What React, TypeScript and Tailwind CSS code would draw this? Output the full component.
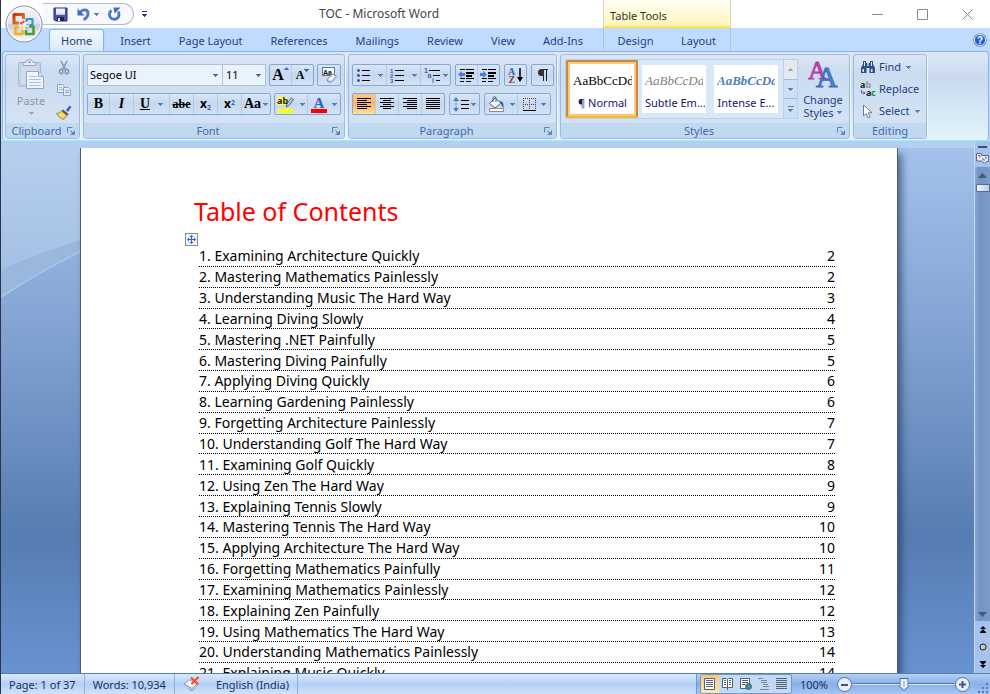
import React, { useState } from 'react';

const tocEntries = [
  { title: 'Examining Architecture Quickly', page: 2 },
  { title: 'Mastering Mathematics Painlessly', page: 2 },
  { title: 'Understanding Music The Hard Way', page: 3 },
  { title: 'Learning Diving Slowly', page: 4 },
  { title: 'Mastering .NET Painfully', page: 5 },
  { title: 'Mastering Diving Painfully', page: 5 },
  { title: 'Applying Diving Quickly', page: 6 },
  { title: 'Learning Gardening Painlessly', page: 6 },
  { title: 'Forgetting Architecture Painlessly', page: 7 },
  { title: 'Understanding Golf The Hard Way', page: 7 },
  { title: 'Examining Golf Quickly', page: 8 },
  { title: 'Using Zen The Hard Way', page: 9 },
  { title: 'Explaining Tennis Slowly', page: 9 },
  { title: 'Mastering Tennis The Hard Way', page: 10 },
  { title: 'Applying Architecture The Hard Way', page: 10 },
  { title: 'Forgetting Mathematics Painfully', page: 11 },
  { title: 'Examining Mathematics Painlessly', page: 12 },
  { title: 'Explaining Zen Painfully', page: 12 },
  { title: 'Using Mathematics The Hard Way', page: 13 },
  { title: 'Understanding Mathematics Painlessly', page: 14 },
  { title: 'Explaining Music Quickly', page: 14 },
];

const tabs = ['Home', 'Insert', 'Page Layout', 'References', 'Mailings', 'Review', 'View', 'Add-Ins'];

/* ---------- icons ---------- */

const Caret: React.FC<{ className?: string }> = ({ className = 'text-[#5a7fb5]' }) => (
  <svg width="5" height="3" viewBox="0 0 5 3" shapeRendering="crispEdges" className={`shrink-0 ${className}`}>
    <path d="M0 0h5v1H0zM1 1h3v1H1zM2 2h1v1H2z" fill="currentColor" />
  </svg>
);

const OfficeLogo = () => (
  <svg width="38" height="38" viewBox="0 0 38 38">
    <defs>
      <linearGradient id="orb" x1="0" y1="0" x2="0" y2="1">
        <stop offset="0" stopColor="#f4f6fa" />
        <stop offset="0.48" stopColor="#dfe5ee" />
        <stop offset="0.52" stopColor="#c3cddc" />
        <stop offset="1" stopColor="#fbfdff" />
      </linearGradient>
      <linearGradient id="lr" x1="0" y1="0" x2="1" y2="1">
        <stop offset="0" stopColor="#c9340c" />
        <stop offset="1" stopColor="#f58220" />
      </linearGradient>
    </defs>
    <circle cx="19" cy="19" r="18" fill="url(#orb)" stroke="#8593ab" strokeWidth="1" />
    <circle cx="19" cy="19" r="16.6" fill="none" stroke="#fff" strokeOpacity="0.8" />
    <circle cx="19" cy="20" r="5" fill="#fff" fillOpacity="0.7" />
    <g fill="none" strokeLinejoin="round">
      <path d="M14 18H9V9.500h9.500V14" stroke="url(#lr)" strokeWidth="3" />
      <path d="M21.500 17v-3h6v6h-3" stroke="#3c94d6" strokeWidth="2.200" />
      <path d="M14 22h-3.500v7h7v-4" stroke="#f3b11b" strokeWidth="2.600" />
      <path d="M24 21.500h4.500v7.500h-7.500v-4" stroke="#4f9f2f" strokeWidth="2.600" />
    </g>
    <path d="M15 17h2.500v2.500H15zM17.500 15.500h2V18h-2z" fill="#e2571b" />
    <path d="M21.500 18.500h2v2h-2z" fill="#58a9e0" />
    <path d="M16 21.500h2v2h-2z" fill="#f7c64a" />
    <path d="M20.500 22h2v2h-2z" fill="#7fbf4d" />
  </svg>
);

const SaveIcon = () => (
  <svg width="15" height="15" viewBox="0 0 15 15">
    <path d="M1 1h13v13H2.500L1 12.500z" fill="#4a4fb8" stroke="#262a80" />
    <path d="M3 1.500h9V8H3z" fill="#eef2fb" />
    <path d="M3 6.500h9V8H3z" fill="#b9c6ea" />
    <path d="M4 10h7v4H4z" fill="#20234f" />
    <path d="M5 11h2v3H5z" fill="#e5e8f5" />
  </svg>
);

const UndoIcon = () => (
  <svg width="13" height="14" viewBox="0 0 13 14">
    <path d="M3 5.500C6 1.500 11 2 11 6.500c0 3-2 5-4.500 6.200" fill="none" stroke="#4a78cc" strokeWidth="2.800" />
    <path d="M0.500 1.500v7h7z" fill="#3c6ac4" />
  </svg>
);

const RedoIcon = () => (
  <svg width="13" height="14" viewBox="0 0 13 14">
    <path d="M3.500 3.500a4.800 4.800 0 1 0 6.500 1" fill="none" stroke="#4a78cc" strokeWidth="2.800" />
    <path d="M5.500 0.500H12.500L6.500 6.500z" fill="#3c6ac4" />
  </svg>
);

const PasteIcon = () => (
  <svg width="28" height="31" viewBox="0 0 28 31">
    <rect x="1.500" y="3.500" width="22" height="24" rx="1.500" fill="#c3d2e6" stroke="#a9bad3" />
    <rect x="4" y="6" width="17" height="19" fill="#cfdcec" />
    <path d="M6 3.500h3c0-4 7-4 7 0h3v3H6z" fill="#e7edf6" stroke="#93a5c2" />
    <circle cx="12.500" cy="3" r="1.200" fill="#8ea1c0" />
    <path d="M9.500 12.500h12l5 5v12h-17z" fill="#f1f5fb" stroke="#8fa5cb" />
    <path d="M21.500 12.500v5h5" fill="#d4dff0" stroke="#8fa5cb" />
    <path d="M12 17.500h8M12 20.500h12M12 23.500h12M12 26.500h12" stroke="#aebfdb" />
  </svg>
);

const CutIcon = () => (
  <svg width="12" height="15" viewBox="0 0 12 15" fill="none" stroke="#7f94b6">
    <path d="M3 1l4.500 9M9 1L4.500 10" strokeWidth="1.500" />
    <ellipse cx="3.200" cy="11.500" rx="1.700" ry="2.200" strokeWidth="1.500" />
    <ellipse cx="8.800" cy="11.500" rx="1.700" ry="2.200" strokeWidth="1.500" />
  </svg>
);

const CopyIcon = () => (
  <svg width="16" height="14" viewBox="0 0 16 14" fill="#e4ebf6" stroke="#8fa3c5">
    <path d="M1.500 1.500h5l2 2v6h-7z" />
    <path d="M3 4.500h3M3 6.500h4" strokeOpacity="0.7" />
    <path d="M7.500 4.500h5l2 2v6h-7z" />
    <path d="M9 7.500h4M9 9.500h4" />
  </svg>
);

const BrushIcon = () => (
  <svg width="16" height="15" viewBox="0 0 16 15">
    <path d="M10 5l3.500-4.500L15.500 2 12 7z" fill="#5b57b0" />
    <path d="M7 4.500L12.500 9l-1.500 2L5.500 6z" fill="#5c5550" />
    <path d="M5.500 6L11 10.500C9.500 12.500 8 14 7 14.500 4.500 13 2 11 0.500 8.500 2.500 8.500 4 7.500 5.500 6z" fill="#f1cf56" stroke="#8e6f21" strokeWidth="0.800" />
    <path d="M3 9l4 3.500M5 8l3.500 3.500" stroke="#fdf1b0" />
  </svg>
);

const LauncherIcon = () => (
  <svg width="8" height="8" viewBox="0 0 8 8" fill="none" stroke="#5f81b4">
    <path d="M0.500 5.500v-5h5" />
    <path d="M3.500 7.500h4v-4M3.500 3.500L6 6" />
    <path d="M4 4h1v1h2v2H5z" fill="#5f81b4" stroke="none" />
  </svg>
);

const ClearFormatIcon = () => (
  <svg width="17" height="16" viewBox="0 0 17 16">
    <rect x="1.500" y="0.500" width="12" height="8" fill="#f4f7fc" stroke="#5e779f" />
    <text x="2" y="7.500" fontSize="7" fontWeight="bold" fontFamily="Liberation Sans" fill="#111">Aa</text>
    <path d="M6 12.500L11.500 7l4 2.500-5 5.500H7.500z" fill="#f3f5fa" stroke="#6f7f9c" />
    <path d="M6.500 12.500l3.500 2 5-5" fill="none" stroke="#a9b5ca" />
  </svg>
);

const HighlightIcon = () => (
  <svg width="18" height="17" viewBox="0 0 18 17">
    <path d="M0 1h10v8H0z" fill="#ffff4d" />
    <text x="0" y="8" fontSize="9" fontWeight="bold" fontFamily="Noto Sans" fill="#222">ab</text>
    <path d="M10 8L14.500 2l2 1.500-4.500 6-3 1.500z" fill="#c9cfda" stroke="#59606e" />
    <path d="M1 13h15v4H1z" fill="#ff0" />
  </svg>
);

const FontColorIcon = () => (
  <svg width="16" height="17" viewBox="0 0 16 17">
    <text x="2.500" y="11.500" fontSize="15" fontWeight="bold" fontFamily="Liberation Serif" fill="#3a5fa8">A</text>
    <path d="M0 13h16v4H0z" fill="#f00" />
  </svg>
);

const BulletsIcon = () => (
  <svg width="13" height="14" viewBox="0 0 13 14" shapeRendering="crispEdges">
    <path d="M5 2h8v1H5zM5 7h8v1H5zM5 12h8v1H5z" fill="#000" />
    <path d="M1 1h1v3H1zM0 2h3v1H0zM1 6h1v3H1zM0 7h3v1H0zM1 11h1v3H1zM0 12h3v1H0z" fill="#2f55a4" />
    <path d="M0 1h3v3H0zM0 6h3v3H0zM0 11h3v3H0z" fill="#3f62a8" fillOpacity="0.500" />
  </svg>
);

const NumberingIcon = () => (
  <svg width="14" height="15" viewBox="0 0 14 15" shapeRendering="crispEdges">
    <path d="M5 2h9v1H5zM5 7h9v1H5zM5 12h9v1H5z" fill="#000" />
    <g fontSize="6" fontWeight="bold" fontFamily="Liberation Sans" fill="#3f62a8">
      <text x="0" y="4.500">1</text>
      <text x="0" y="9.500">2</text>
      <text x="0" y="14.500">3</text>
    </g>
  </svg>
);

const MultilevelIcon = () => (
  <svg width="17" height="15" viewBox="0 0 17 15">
    <path d="M5 2h11v1H5zM9 7h7v1H9zM12 12h4v1h-4z" fill="#000" />
    <g fontSize="7" fontWeight="bold" fontFamily="Liberation Sans" fill="#3f62a8">
      <text x="0" y="5">1</text>
      <text x="3.500" y="9.500">a</text>
      <text x="8" y="14.500">i</text>
    </g>
  </svg>
);

const IndentIcon: React.FC<{ increase?: boolean }> = ({ increase }) => (
  <svg width="17" height="15" viewBox="0 0 17 15" shapeRendering="crispEdges">
    <path d="M2 1h5v1H2zM8 1h8v1H8zM8 4h8v2H8zM8 7h6v2H8zM2 10h5v1H2zM8 10h8v1H8zM2 13h4v1H2zM8 13h5v1H8z" fill="#000" />
    {increase ? (
      <path d="M0 5h3V3l4 3.500L3 10V8H0z" fill="#4a7ed0" shapeRendering="auto" />
    ) : (
      <path d="M7 5H4V3L0 6.500 4 10V8h3z" fill="#4a7ed0" shapeRendering="auto" />
    )}
  </svg>
);

const SortIcon = () => (
  <svg width="16" height="17" viewBox="0 0 16 17">
    <text x="0" y="7.500" fontSize="10" fontWeight="bold" fontFamily="Liberation Serif" fill="#3a5fa8">A</text>
    <text x="0.500" y="16" fontSize="10" fontWeight="bold" fontFamily="Liberation Serif" fill="#9b3a3a">Z</text>
    <path d="M12 1v10" stroke="#000" strokeWidth="1.500" />
    <path d="M9 10h6l-3 5z" />
  </svg>
);

const PilcrowIcon = () => (
  <svg width="12" height="14" viewBox="0 0 12 14" shapeRendering="crispEdges">
    <path d="M5 1h6v1H5zM6 1h1v12H6zM9 1h1v12H9z" fill="#222" />
    <path d="M7 1v7H4.500A3.500 3.500 0 0 1 4.500 1z" fill="#333" shapeRendering="auto" />
  </svg>
);

const AlignIcon: React.FC<{ kind: string }> = ({ kind }) => (
  <svg width="14" height="12" viewBox="0 0 14 12" shapeRendering="crispEdges">
    {[0, 2, 4, 6, 8, 10].map((y, i) => {
      const w = kind === 'justify' || i % 2 === 0 ? 14 : kind === 'center' ? 8 : 10;
      const x = kind === 'right' ? 14 - w : kind === 'center' ? (14 - w) / 2 : 0;
      return <rect key={y} x={x} y={y} width={w} height="1" />;
    })}
  </svg>
);

const LineSpacingIcon = () => (
  <svg width="16" height="15" viewBox="0 0 16 15">
    <path d="M8 3h8v1H8zM8 7h8v1H8zM8 11h8v1H8z" />
    <path d="M3 0L6 4H0zM3 15l3-4H0z" fill="#4a7ed0" />
    <path d="M3 3v9" stroke="#4a7ed0" strokeDasharray="2 1" />
  </svg>
);

const ShadingIcon = () => (
  <svg width="17" height="16" viewBox="0 0 17 16">
    <path d="M7 2l6 5-6 5-5.500-4.500z" fill="#f4f7fc" stroke="#4b5f85" />
    <path d="M5 6V2.500C5 0 8 0 8 2.500V6" fill="none" stroke="#4b5f85" />
    <path d="M12 5c3 0 4 3 3.500 7-2-1-2-4-3-5z" fill="#3763b8" />
    <path d="M1.500 12.500h14v3h-14z" fill="#fff" stroke="#8b8b8b" />
  </svg>
);

const BordersIcon = () => (
  <svg width="13" height="13" viewBox="0 0 13 13" shapeRendering="crispEdges">
    <path d="M0 0.500h13M0 6.500h13M0.500 0v12M6.500 0v12M12.500 0v12" stroke="#444" strokeDasharray="1 1" />
    <path d="M0 12h13v1H0z" />
  </svg>
);

const ChangeStylesIcon = () => (
  <svg width="30" height="30" viewBox="0 0 30 30">
    <text x="0" y="20" fontSize="26" fontFamily="Liberation Serif" fill="#b341a8" stroke="#b341a8" strokeWidth="0.900">A</text>
    <text x="8" y="28" fontSize="30" fontFamily="Liberation Serif" fill="#4a80d4" stroke="#3f6fbe" strokeWidth="1">A</text>
  </svg>
);

const FindIcon = () => (
  <svg width="16" height="14" viewBox="0 0 16 14">
    <path d="M3 1h3v2h1v3h2V3h1V1h3v3l2 4v5H9.500V8h-3v5H1V8l2-4z" fill="#2f4f86" />
    <path d="M4 2h1v4H4zM11 2h1v4h-1zM2.500 9h1.500v3H2.500zM11 9h1.500v3H11z" fill="#dce6f5" />
    <path d="M7 3.500h2v2H7z" fill="#8aa3cd" />
  </svg>
);

const ReplaceIcon = () => (
  <svg width="17" height="16" viewBox="0 0 17 16">
    <g fontSize="9" fontWeight="bold" fontFamily="Noto Sans">
      <text x="0" y="7" fill="#222">a</text>
      <text x="5.500" y="7" fill="#999">b</text>
      <text x="6" y="15" fill="#222">a</text>
      <text x="11" y="15" fill="#1f8a2c">c</text>
    </g>
    <path d="M1.500 9v3H5M3.500 10.500L5 12l-1.500 1.500" fill="none" stroke="#3f62a8" />
  </svg>
);

const SelectIcon = () => (
  <svg width="11" height="15" viewBox="0 0 11 15">
    <path d="M1.500 1v11l2.700-2.500 2 4.500 2-1-2-4.200H10z" fill="#fff" stroke="#6b7c98" />
  </svg>
);

const HelpIcon = () => (
  <svg width="14" height="14" viewBox="0 0 14 14">
    <circle cx="7" cy="7" r="6.600" fill="#3c5da0" />
    <circle cx="7" cy="7" r="5.600" fill="#2460cf" stroke="#e8f0ff" strokeWidth="1" />
    <text x="4" y="10.500" fontSize="10" fontWeight="bold" fontFamily="Liberation Sans" fill="#fff">?</text>
  </svg>
);

const MoveHandleIcon = () => (
  <svg width="9" height="9" viewBox="0 0 9 9" fill="#2f5fc4">
    <path d="M4 1h1v7H4zM1 4h7v1H1z" />
    <path d="M4.500 0L6.500 2h-4zM4.500 9l2-2h-4zM0 4.500l2-2v4zM9 4.500l-2-2v4z" />
  </svg>
);

const ProofIcon = () => (
  <svg width="18" height="16" viewBox="0 0 18 16">
    <path d="M0.500 9.500L6 5l9 4L9 15z" fill="#3c5fa8" />
    <path d="M1 8L6.500 4 15 7l-6 5.500z" fill="#eef3fb" stroke="#8395b8" strokeWidth="0.800" />
    <path d="M1 9.500L9 13.500l6-5" fill="none" stroke="#fff" />
    <path d="M8 1.500l7 7M15.500 1l-7 7" stroke="#f0512b" strokeWidth="2.200" />
  </svg>
);

const ViewIcon: React.FC<{ kind: string }> = ({ kind }) => (
  <svg width="13" height="12" viewBox="0 0 13 12" fill="none" stroke="#555f6e">
    {kind === 'print' && (
      <>
        <path d="M1.500 0.500h10v11h-10z" fill="#fff" />
        <path d="M3 2.500h7M3 4.500h7M3 6.500h7M3 8.500h7" />
      </>
    )}
    {kind === 'reading' && (
      <>
        <path d="M1.500 0.500h4l1 1 1-1h4v9h-4l-1 1-1-1h-4z" fill="#fff" />
        <path d="M6.500 1v11M3 2.500h2M3 4.500h2M3 6.500h2M8 2.500h2M8 4.500h2M8 6.500h2" />
      </>
    )}
    {kind === 'web' && (
      <>
        <path d="M1.500 0.500h9v10h-9z" fill="#fff" />
        <path d="M3 2.500h6M3 4.500h6M3 6.500h3" />
        <circle cx="9.500" cy="8.500" r="3" fill="#3e9a6a" stroke="#2c62b0" />
      </>
    )}
    {kind === 'outline' && <path d="M1 0.500h5M4 2.500h6M4 4.500h6M6 6.500h5M6 8.500h6M3 11.500h9" stroke="#7d8795" />}
    {kind === 'draft' && <path d="M1 0.500h11M1 2.500h11M1 4.500h11M1 6.500h11M1 8.500h11M1 10.500h11" />}
  </svg>
);

/* ---------- ribbon pieces ---------- */

const Group: React.FC<{ title: string; launcher?: boolean; className?: string; children: React.ReactNode }> = ({
  title,
  launcher = true,
  className = '',
  children,
}) => (
  <section
    className={`shrink-0 flex flex-col rounded-[3px] border border-[#9dbbe0] shadow-[1px_1px_0_#edf5ff] overflow-hidden bg-linear-to-b from-[#dce7f4] via-[#cbdcf0] via-20% to-[#d5e5f6] ${className}`}
  >
    <div className="flex-1 flex">{children}</div>
    <div className="h-[15px] shrink-0 flex items-center bg-[#c1d8f1] text-[11px] leading-none text-[#3e6aaa]">
      <span className="flex-1 text-center">{title}</span>
      {launcher && (
        <button aria-label={`${title} options`} className="mr-1">
          <LauncherIcon />
        </button>
      )}
    </div>
  </section>
);

const ButtonBox: React.FC<{ className?: string; children: React.ReactNode }> = ({ className = '', children }) => (
  <div
    className={`h-[22px] flex items-stretch rounded-[2px] border border-[#86a7d3] divide-x divide-[#b4cae6] bg-linear-to-b from-[#d9e6f5] via-[#c5d8ef] via-50% to-[#d3e3f5] overflow-hidden ${className}`}
  >
    {children}
  </div>
);

const Tool: React.FC<{ label: string; caret?: boolean; className?: string; children: React.ReactNode }> = ({
  label,
  caret,
  className = 'flex-1 gap-[5px]',
  children,
}) => (
  <button
    aria-label={label}
    className={`flex items-center justify-center leading-none text-black hover:bg-[#ffe7a2] ${className}`}
  >
    {children}
    {caret && <Caret />}
  </button>
);

const Ribbon = () => (
  <div className="mx-[1px] shrink-0 rounded-[4px] border border-[#8db2e3] border-b-[#8ff0f8] bg-linear-to-b from-[#dde8f5] via-[#c9daee] via-30% to-[#e3f4fd] h-[90px] flex items-stretch gap-[3px] px-[2px] pt-[2px] pb-[1px]">
    <Group title="Clipboard" className="w-[75px]">
      <button className="w-[50px] flex flex-col items-center pt-1 text-[11px] leading-4 text-[#8f98a6]">
        <PasteIcon />
        <span className="pt-[3px]">Paste</span>
        <Caret className="text-[#a3a9b3] mt-[3px]" />
      </button>
      <div className="flex flex-col items-center gap-2 pt-[5px]">
        <button aria-label="Cut">
          <CutIcon />
        </button>
        <button aria-label="Copy">
          <CopyIcon />
        </button>
        <button aria-label="Format Painter">
          <BrushIcon />
        </button>
      </div>
    </Group>

    <Group title="Font" className="w-[262px]">
      <div className="flex-1 flex flex-col gap-[7px] px-[3px] pt-[9px]">
        <div className="flex gap-[3px]">
          <div className="flex h-[22px]">
            <label className="relative flex items-center">
              <select aria-label="Font name" className="w-[136px] h-full appearance-none border border-[#abc1de] bg-[#eaf2fb] pl-[2px] text-[11px] text-black">
                <option>Segoe UI</option>
              </select>
              <Caret className="absolute right-[5px] text-[#4a6b9e]" />
            </label>
            <label className="relative flex items-center">
              <select aria-label="Font size" className="w-[43px] h-full appearance-none border border-l-0 border-[#abc1de] bg-[#eaf2fb] pl-[3px] text-[11px] text-black">
                <option>11</option>
              </select>
              <Caret className="absolute right-[5px] text-[#4a6b9e]" />
            </label>
          </div>
          <ButtonBox className="w-[45px] font-['Liberation_Serif',serif] font-bold">
            <Tool label="Grow Font" className="flex-1 text-[16px]">
              <span className="flex items-start">A<svg width="5" height="3"><path d="M2.500 0L5 3H0z" fill="#3f62a8" /></svg></span>
            </Tool>
            <Tool label="Shrink Font" className="flex-1 text-[12px]">
              <span className="flex items-start">A<Caret className="text-[#3f62a8]" /></span>
            </Tool>
          </ButtonBox>
          <ButtonBox className="w-6">
            <Tool label="Clear Formatting">
              <ClearFormatIcon />
            </Tool>
          </ButtonBox>
        </div>
        <div className="flex gap-[3px]">
          <ButtonBox className="w-[184px] font-['Liberation_Serif',serif] text-[14px] font-bold">
            <Tool label="Bold" className="w-[22px]">B</Tool>
            <Tool label="Italic" className="w-6 italic">I</Tool>
            <Tool label="Underline" caret className="w-9 gap-2">
              <span className="underline">U</span>
            </Tool>
            <Tool label="Strikethrough" className="w-6 text-[12px] line-through">abe</Tool>
            <Tool label="Subscript" className="w-6 font-['Noto_Sans',sans-serif] text-[12px]">
              <span>x<sub className="text-[7px] text-[#3f62a8]">2</sub></span>
            </Tool>
            <Tool label="Superscript" className="w-6 font-['Noto_Sans',sans-serif] text-[12px]">
              <span>x<sup className="text-[7px] text-[#3f62a8]">2</sup></span>
            </Tool>
            <Tool label="Change Case" caret className="flex-1 gap-[2px]">Aa</Tool>
          </ButtonBox>
          <ButtonBox className="w-[67px]">
            <Tool label="Text Highlight Color" caret>
              <HighlightIcon />
            </Tool>
            <Tool label="Font Color" caret>
              <FontColorIcon />
            </Tool>
          </ButtonBox>
        </div>
      </div>
    </Group>

    <Group title="Paragraph" className="w-[209px]">
      <div className="flex-1 flex flex-col gap-[7px] px-[3px] pt-[9px]">
        <div className="flex gap-1">
          <ButtonBox className="w-[99px]">
            <Tool label="Bullets" caret className="w-[34px] gap-2">
              <BulletsIcon />
            </Tool>
            <Tool label="Numbering" caret className="w-[34px] gap-2">
              <NumberingIcon />
            </Tool>
            <Tool label="Multilevel List" caret className="flex-1 gap-[2px]">
              <MultilevelIcon />
            </Tool>
          </ButtonBox>
          <ButtonBox className="w-[45px]">
            <Tool label="Decrease Indent">
              <IndentIcon />
            </Tool>
            <Tool label="Increase Indent">
              <IndentIcon increase />
            </Tool>
          </ButtonBox>
          <ButtonBox className="w-[23px]">
            <Tool label="Sort">
              <SortIcon />
            </Tool>
          </ButtonBox>
          <ButtonBox className="w-[23px]">
            <Tool label="Show Paragraph Marks">
              <PilcrowIcon />
            </Tool>
          </ButtonBox>
        </div>
        <div className="flex gap-1">
          <ButtonBox className="w-[93px]">
            <Tool label="Align Left" className="flex-1 bg-linear-to-b from-[#f9c98a] via-[#fbb45c] to-[#fee29a]">
              <AlignIcon kind="left" />
            </Tool>
            <Tool label="Center">
              <AlignIcon kind="center" />
            </Tool>
            <Tool label="Align Right">
              <AlignIcon kind="right" />
            </Tool>
            <Tool label="Justify">
              <AlignIcon kind="justify" />
            </Tool>
          </ButtonBox>
          <ButtonBox className="w-[31px]">
            <Tool label="Line Spacing" caret className="flex-1 gap-[2px]">
              <LineSpacingIcon />
            </Tool>
          </ButtonBox>
          <ButtonBox className="w-[67px]">
            <Tool label="Shading" caret>
              <ShadingIcon />
            </Tool>
            <Tool label="Borders" caret>
              <BordersIcon />
            </Tool>
          </ButtonBox>
        </div>
      </div>
    </Group>

    <Group title="Styles" className="w-[290px]">
      <div className="flex-1 flex gap-1 pl-1 py-1">
        <div className="flex border border-[#b9d0ed] bg-[#dae7f6]">
          <div className="flex items-center gap-2 pr-[5px]">
            <button className="w-[72px] h-[58px] rounded-[2px] border-2 border-[#c48a4a] border-b-[#f5b82e] bg-white shadow-[inset_0_0_0_2px_#fbc873] flex flex-col justify-center pl-[5px] pr-1 overflow-hidden">
              <span className="overflow-hidden whitespace-nowrap text-left font-['Liberation_Serif',serif] text-[13px] leading-7 text-black">AaBbCcDd</span>
              <span className="text-[11px] leading-4 text-[#15156b] whitespace-nowrap">¶ Normal</span>
            </button>
            <button className="w-16 h-12 bg-white flex flex-col justify-center px-[3px] overflow-hidden -ml-1">
              <span className="overflow-hidden whitespace-nowrap text-left font-['Liberation_Serif',serif] text-[13px] leading-7 italic text-[#808080]">AaBbCcDd</span>
              <span className="text-[11px] leading-4 text-[#15156b] whitespace-nowrap">Subtle Em...</span>
            </button>
            <button className="w-16 h-12 bg-white flex flex-col justify-center px-[3px] overflow-hidden">
              <span className="overflow-hidden whitespace-nowrap text-left font-['Liberation_Serif',serif] text-[13px] leading-7 font-bold italic text-[#4f81bd]">AaBbCcDd</span>
              <span className="text-[11px] leading-4 text-[#15156b] whitespace-nowrap">Intense E...</span>
            </button>
          </div>
          <div className="w-[14px] flex flex-col border-l border-[#b9d0ed] divide-y divide-[#9fbce2] bg-[#cddff4]">
            <button aria-label="Previous styles" className="flex-1 flex items-center justify-center bg-[#e6e9ee]">
              <Caret className="rotate-180 text-[#a0a6b0]" />
            </button>
            <button aria-label="Next styles" className="flex-1 flex items-center justify-center">
              <Caret />
            </button>
            <button aria-label="More styles" className="flex-1 flex flex-col gap-[2px] items-center justify-center">
              <span className="w-[6px] h-px bg-[#5a7fb5]" />
              <Caret />
            </button>
          </div>
        </div>
        <button className="w-[42px] flex flex-col items-center text-[11px] leading-[13px] text-[#1e3f86]">
          <ChangeStylesIcon />
          <span className="pt-1">Change</span>
          <span className="flex items-center gap-1">Styles <Caret /></span>
        </button>
      </div>
    </Group>

    <Group title="Editing" launcher={false} className="w-[74px]">
      <div className="flex flex-col pt-[1px] pl-[6px] text-[11px] text-[#1e3f86]">
        <button className="h-[22px] flex items-center">
          <span className="w-[19px]"><FindIcon /></span> Find <Caret className="ml-[5px] text-[#5a7fb5]" />
        </button>
        <button className="h-[22px] flex items-center">
          <span className="w-[19px]"><ReplaceIcon /></span> Replace
        </button>
        <button className="h-[22px] flex items-center">
          <span className="w-[19px] pl-[2px]"><SelectIcon /></span> Select <Caret className="ml-[5px] text-[#5a7fb5]" />
        </button>
      </div>
    </Group>
  </div>
);

/* ---------- window chrome ---------- */

const Header = () => (
  <header className="shrink-0 flex text-[11px] text-[#1e3f86]">
    <div className="relative w-[602px] shrink-0 flex flex-col">
      <div className="h-7 flex items-center bg-white pl-[42px]">
        <div className="h-[22px] w-[91px] flex items-center gap-[9px] rounded-r-full border border-l-0 border-[#b6bfd0] bg-[#f6f8fc] pl-[10px]">
          <button aria-label="Save">
            <SaveIcon />
          </button>
          <button aria-label="Undo" className="flex items-center gap-1">
            <UndoIcon />
            <Caret />
          </button>
          <button aria-label="Redo">
            <RedoIcon />
          </button>
        </div>
        <button aria-label="Customize Quick Access Toolbar" className="ml-2 flex flex-col items-center gap-[2px]">
          <span className="w-[5px] h-px bg-[#1e3f86]" />
          <Caret className="text-[#1e3f86]" />
        </button>
        <h1 className="flex-1 pl-2 text-center text-[12px] text-[#444]">TOC - Microsoft Word</h1>
      </div>
      <nav className="h-[23px] flex bg-[#bfdbff] pl-12">
        {tabs.map((tab) => (
          <button
            key={tab}
            className={
              tab === 'Home'
                ? 'mt-[1px] mr-[2px] px-[11px] pt-[2px] rounded-t-[3px] border border-b-0 border-[#8db2e3] bg-linear-to-b from-[#f4f9ff] to-[#dde8f5] shadow-[0_0_2px_#7fe3f5]'
                : 'px-[14px] pt-1 whitespace-nowrap'
            }
          >
            {tab}
          </button>
        ))}
      </nav>
      <button aria-label="Office Button" className="absolute left-1 top-[5px]">
        <OfficeLogo />
      </button>
    </div>

    <div className="w-[128px] shrink-0 bg-[#bfdbff]">
      <div className="h-7 flex items-end pl-[6px] pb-[2px] text-[#333] border-x border-[#d9d9b8] border-b-2 border-b-[#ffe34a] bg-linear-to-b from-[#fffef5] to-[#fff6b8]">
        Table Tools
      </div>
      <div className="h-[23px] flex border-x border-[#a9c4ea] pt-1">
        <button className="flex-1">Design</button>
        <button className="flex-1">Layout</button>
      </div>
    </div>

    <div className="flex-1 flex flex-col">
      <div className="h-7 flex items-center justify-end gap-[34px] bg-white pr-[17px] text-[#8a8a8a]">
        <button aria-label="Minimize">
          <svg width="11" height="11" stroke="currentColor"><path d="M0 5.500h11" /></svg>
        </button>
        <button aria-label="Maximize">
          <svg width="11" height="11" stroke="currentColor" fill="none"><path d="M0.500 0.500h10v10H0.500z" /></svg>
        </button>
        <button aria-label="Close">
          <svg width="11" height="11" stroke="currentColor"><path d="M0.500 0.500l10 10M10.500 0.500l-10 10" /></svg>
        </button>
      </div>
      <div className="h-[23px] flex items-center justify-end bg-[#bfdbff] pr-[3px]">
        <button aria-label="Help">
          <HelpIcon />
        </button>
      </div>
    </div>
  </header>
);

const ScrollBar = () => (
  <aside className="w-4 shrink-0 flex flex-col items-center bg-[#a5c3ed] border-l border-[#c4d8f3]">
    <div className="h-[26px] flex flex-col items-center gap-1 pt-[5px]">
      <span className="w-[9px] h-[2px] shrink-0 bg-[#3d4f70]" />
      <button aria-label="View Ruler">
        <svg width="13" height="12" viewBox="0 0 13 12">
          <path d="M0.500 1.500h5v2h7v6h-2l-2 2-3-2.500h-5z" fill="#efeaf6" stroke="#5a678a" />
          <path d="M2 3.500h2v2M6 7h2v2M9 5h1v2" fill="none" stroke="#5a678a" />
        </svg>
      </button>
    </div>
    <div className="flex-1 w-full flex flex-col items-center bg-linear-to-r from-[#89a6cf] via-[#7493c0] via-30% to-[#7c9bc8]">
      <button aria-label="Scroll up" className="h-[17px] shrink-0">
        <svg width="9" height="5"><path d="M4.500 0L9 5H0z" fill="#44577c" /></svg>
      </button>
      <div className="w-[14px] h-2 rounded-[1px] border border-[#536a96] bg-linear-to-r from-[#f4f6f8] to-[#b9cde4]" />
      <button aria-label="Scroll down" className="mt-auto h-[13px]">
        <svg width="9" height="5"><path d="M0 0h9L4.500 5z" fill="#44577c" /></svg>
      </button>
    </div>
    <div className="h-[52px] flex flex-col items-center justify-around">
      <button aria-label="Previous page">
        <svg width="6" height="7"><path d="M3 0l3 3H0zM3 3l3 3H0zM0 6h6v1H0z" /></svg>
      </button>
      <button aria-label="Select browse object">
        <svg width="8" height="8"><circle cx="4" cy="4" r="3" fill="#c9c9c4" stroke="#222" /></svg>
      </button>
      <button aria-label="Next page">
        <svg width="6" height="7"><path d="M0 0h6v1H0zM3 4L0 1h6zM3 7L0 4h6z" /></svg>
      </button>
    </div>
  </aside>
);

const Document = () => (
  <main className="flex-1 min-h-0 flex">
    <div className="relative flex-1 overflow-hidden">
      <svg className="absolute inset-0 w-full h-full" viewBox="0 0 973 532" preserveAspectRatio="none">
        <defs>
          <linearGradient id="desk" x1="0" y1="0" x2="0" y2="1">
            <stop offset="0" stopColor="#a5c3ec" />
            <stop offset="0.350" stopColor="#83a4d3" />
            <stop offset="0.740" stopColor="#567db1" />
            <stop offset="1" stopColor="#6892d1" />
          </linearGradient>
          <linearGradient id="glow" x1="0" y1="0" x2="0" y2="1">
            <stop offset="0" stopColor="#b7d0ef" />
            <stop offset="1" stopColor="#a5c0e5" />
          </linearGradient>
        </defs>
        <path d="M0 0h973v532H0z" fill="url(#desk)" />
        <path d="M0 0h400v40Q200 40 80 99 30 115 0 130z" fill="url(#glow)" />
        <path d="M0 130Q40 112 80 99v13Q40 130 0 156z" fill="#9ab8de" />
        <path d="M0 156Q40 130 80 110" fill="none" stroke="#aac5e8" strokeWidth="1.500" />
        <path d="M0 0h973v7H0z" fill="#b5cff0" />
      </svg>
      <div className="relative h-full pt-[7px] pl-[3px]">
        <article className="w-[818px] max-w-full h-full mx-auto bg-white border-x border-[#4d5a70] shadow-[4px_6px_7px_rgba(30,50,90,0.6)] px-[62px] pt-[47px] text-black">
          <h2 className="pl-[51px] text-[25px] leading-8 text-[#f00]">Table of Contents</h2>
          <div className="pl-[42px] pt-[6px]">
            <button aria-label="Move table" className="flex p-[1px] border border-[#8c8c8c] bg-[#f2f5fb]">
              <MoveHandleIcon />
            </button>
          </div>
          <div className="pl-14">
            <table className="w-full h-[438px] border-separate border-spacing-0 text-[14px] leading-[19px]">
              <tbody>
                {tocEntries.map((entry, i) => (
                  <tr key={entry.title}>
                    <td className="p-0 border-b border-dotted border-black">{i + 1}. {entry.title}</td>
                    <td className="p-0 border-b border-dotted border-black text-right">{entry.page}</td>
                  </tr>
                ))}
              </tbody>
            </table>
          </div>
        </article>
      </div>
    </div>
    <ScrollBar />
  </main>
);

const StatusBar = () => {
  const [zoom, setZoom] = useState(50);

  return (
    <footer className="h-[21px] shrink-0 flex items-stretch border-t border-[#567db0] bg-linear-to-b from-[#dbe9fb] via-[#b4d0f6] via-50% to-[#cfe2fb] text-[11px] leading-none text-[#1a2f66]">
      <div className="flex items-stretch divide-x divide-[#8fb1e0] whitespace-nowrap">
        <button className="px-2">Page: 1 of 37</button>
        <button className="px-2">Words: 10,934</button>
        <button className="px-2 flex items-center gap-[15px]">
          <ProofIcon />
          English (India)
        </button>
        <span />
      </div>
      <div className="ml-auto flex items-center border-l border-[#6f97d4] bg-linear-to-b from-[#b5d0f4] via-[#88b0ea] via-50% to-[#a5c6f4] pl-[3px]">
        <div className="h-5 flex rounded-[2px] border border-[#6f97d4] bg-[#c3daf7]">
          {['print', 'reading', 'web', 'outline', 'draft'].map((kind) => (
            <button
              key={kind}
              aria-label={`${kind} view`}
              className={`w-[18px] flex items-center justify-center ${kind === 'print' ? 'bg-linear-to-b from-[#fbc47a] to-[#fee8a6]' : ''}`}
            >
              <ViewIcon kind={kind} />
            </button>
          ))}
        </div>
        <button className="px-2">100%</button>
        <button aria-label="Zoom out">
          <svg width="17" height="17" viewBox="0 0 17 17">
            <circle cx="8.500" cy="8.500" r="7" fill="#e6effa" stroke="#56719f" />
            <path d="M5 8h7v2H5z" fill="#44577c" />
          </svg>
        </button>
        <label className="relative w-[101px] h-full flex items-center">
          <span className="w-full h-[2px] bg-[#4d74b4] border-b border-[#d7e6fa]" />
          <span className="absolute flex -translate-x-1/2" style={{ left: `${zoom}%` }}>
            <svg width="9" height="13" viewBox="0 0 9 13">
              <path d="M0.500 0.500h8v8l-4 4-4-4z" fill="#e6effa" stroke="#4d6698" />
              <path d="M4.500 3v6" stroke="#8ba3cc" />
            </svg>
          </span>
          <input
            type="range"
            aria-label="Zoom"
            value={zoom}
            onChange={(e) => setZoom(Number(e.target.value))}
            className="absolute inset-0 w-full opacity-0"
          />
        </label>
        <button aria-label="Zoom in">
          <svg width="17" height="17" viewBox="0 0 17 17">
            <circle cx="8.500" cy="8.500" r="7" fill="#e6effa" stroke="#56719f" />
            <path d="M5 7.500h7v2H5zM7.500 5h2v7h-2z" fill="#44577c" />
          </svg>
        </button>
        <svg width="12" height="12" className="ml-[7px] self-end" fill="#5577b5">
          <path d="M8 1h2v2H8zM4 5h2v2H4zM8 5h2v2H8zM0 9h2v2H0zM4 9h2v2H4zM8 9h2v2H8z" />
        </svg>
      </div>
    </footer>
  );
};

const App: React.FC = () => {
  return (
    <div className="h-screen flex flex-col overflow-hidden border-l border-[#2b3448] bg-[#bfdbff] font-['Noto_Sans',sans-serif]">
      <Header />
      <Ribbon />
      <Document />
      <StatusBar />
    </div>
  );
};

export default App;
